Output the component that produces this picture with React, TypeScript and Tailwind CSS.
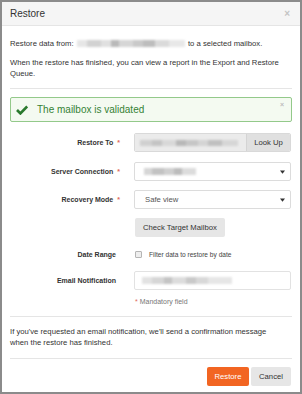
import React from "react";

function Blur({ segs, className = "" }: { segs: [number, string][]; className?: string }) {
  return (
    <span className={"inline-flex items-center align-middle blur-[0.8px] " + className}>
      {segs.map(([w, c], i) => (
        <span key={i} className="inline-block h-full" style={{ width: w, background: c }} />
      ))}
    </span>
  );
}

function Caret() {
  return (
    <svg width="5" height="4" viewBox="0 0 5 4" className="absolute right-[5px] top-1/2 -translate-y-1/2">
      <path d="M0 0.5 L5 0.5 L2.5 3.8 Z" fill="#333" />
    </svg>
  );
}

function Label({ text, req }: { text: string; req?: boolean }) {
  return (
    <div className="w-[110px] shrink-0 text-right text-[7px] font-bold text-[#333] leading-none">
      {text}
      {req ? <span className="text-[#e06a5a] ml-[4px]">*</span> : <span className="inline-block w-[4px]" />}
    </div>
  );
}

export default function App() {
  return (
    <div className="w-[302px] h-[394px] box-border border-2 border-[#8b8b8b] bg-white flex flex-col font-['Liberation_Sans',Arial,sans-serif] text-[#333] overflow-hidden">
      {/* Header */}
      <div className="h-[24px] shrink-0 bg-[#f5f5f5] border-b border-[#e5e5e5] flex items-center justify-between pl-[8px] pr-[10px]">
        <span className="text-[10px] text-[#333]">Restore</span>
        <span className="text-[10px] font-bold text-[#c4c4c4] leading-none">×</span>
      </div>

      {/* Body */}
      <div className="px-[8px] pt-[12px] flex flex-col">
        <p className="text-[7.7px] leading-[11px] mb-[8px] whitespace-nowrap">
          Restore data from:{" "}
          <Blur
            className="h-[7px] w-[108px] mx-[1px]"
            segs={[
              [10, "#e6e6e6"],
              [14, "#d2d2d2"],
              [10, "#e0e0e0"],
              [8, "#b9b9b9"],
              [14, "#d6d6d6"],
              [10, "#c9c9c9"],
              [12, "#bdbdbd"],
              [14, "#dadada"],
              [16, "#e8e8e8"],
            ]}
          />{" "}
          to a selected mailbox.
        </p>
        <p className="text-[7.7px] leading-[11px]">
          When the restore has finished, you can view a report in the Export and Restore Queue.
        </p>
        <div className="h-px bg-[#e5e5e5] mt-[9px]" />

        {/* Alert */}
        <div className="mt-[8px] h-[25px] border border-[#93c98a] bg-[#f4faf1] rounded-[2px] flex items-center relative">
          <svg width="12" height="10" viewBox="0 0 12 10" className="ml-[5px]">
            <path d="M1 5 L4.4 8.4 L11.2 1.5" fill="none" stroke="#2a7a2e" strokeWidth="2.7" strokeLinejoin="miter" />
          </svg>
          <span className="ml-[9px] text-[10px] text-[#358235] leading-none">The mailbox is validated</span>
          <span className="absolute right-[7px] top-[3px] text-[7px] font-bold text-[#bdbdbd] leading-none">×</span>
        </div>

        {/* Form */}
        <div className="mt-[11px] flex flex-col">
          {/* Restore To */}
          <div className="flex items-center">
            <Label text="Restore To" req />
            <div className="ml-[14px] w-[157px] h-[19px] flex border border-[#d9d9d9] rounded-[2px] overflow-hidden">
              <div className="flex-1 bg-[#ebebeb] flex items-center pl-[5px]">
                <Blur
                  className="h-[6px] w-[98px]"
                  segs={[
                    [12, "#d0d0d0"],
                    [10, "#c4c4c4"],
                    [14, "#d8d8d8"],
                    [10, "#b8b8b8"],
                    [12, "#c6c6c6"],
                    [10, "#d4d4d4"],
                    [14, "#c0c0c0"],
                    [16, "#d6d6d6"],
                  ]}
                />
              </div>
              <div className="w-[44px] bg-[#e0e0e0] border-l border-[#d4d4d4] flex items-center justify-center text-[7.7px] text-[#333]">
                Look Up
              </div>
            </div>
          </div>

          {/* Server Connection */}
          <div className="flex items-center mt-[10px]">
            <Label text="Server Connection" req />
            <div className="ml-[14px] w-[157px] h-[19px] relative border border-[#dcdcdc] rounded-[2px] bg-white flex items-center pl-[9px]">
              <Blur
                className="h-[7px] w-[52px]"
                segs={[
                  [8, "#d6d6d6"],
                  [12, "#c2c2c2"],
                  [10, "#cfcfcf"],
                  [8, "#bcbcbc"],
                  [14, "#dcdcdc"],
                ]}
              />
              <Caret />
            </div>
          </div>

          {/* Recovery Mode */}
          <div className="flex items-center mt-[9px]">
            <Label text="Recovery Mode" req />
            <div className="ml-[14px] w-[157px] h-[19px] relative border border-[#dcdcdc] rounded-[2px] bg-white flex items-center pl-[10px] text-[7.7px] text-[#555]">
              Safe view
              <Caret />
            </div>
          </div>

          {/* Check Target Mailbox */}
          <div className="flex items-center mt-[9px]">
            <div className="w-[110px] shrink-0" />
            <div className="ml-[15px] h-[19px] px-[8px] bg-[#e6e6e6] rounded-[2px] flex items-center text-[7.7px] text-[#333]">
              Check Target Mailbox
            </div>
          </div>

          {/* Date Range */}
          <div className="flex items-center mt-[12px] h-[11px]">
            <Label text="Date Range" />
            <div className="ml-[15px] flex items-center">
              <span className="inline-block w-[7px] h-[7px] border border-[#b5b5b5] bg-[#eeeeee] rounded-[1px]" />
              <span className="ml-[7px] text-[6.6px] text-[#444]">Filter data to restore by date</span>
            </div>
          </div>

          {/* Email Notification */}
          <div className="flex items-center mt-[11px]">
            <Label text="Email Notification" />
            <div className="ml-[14px] w-[157px] h-[19px] border border-[#e2e2e2] rounded-[2px] bg-white flex items-center pl-[7px]">
              <Blur
                className="h-[7px] w-[90px]"
                segs={[
                  [10, "#e2e2e2"],
                  [12, "#d6d6d6"],
                  [8, "#c4c4c4"],
                  [14, "#dcdcdc"],
                  [10, "#c9c9c9"],
                  [12, "#d8d8d8"],
                  [24, "#e6e6e6"],
                ]}
              />
            </div>
          </div>

          {/* Mandatory */}
          <div className="flex items-center mt-[7px] h-[11px]">
            <div className="w-[110px] shrink-0" />
            <span className="ml-[15px] text-[7px] text-[#777]">
              <span className="text-[#e06a5a]">*</span> Mandatory field
            </span>
          </div>
        </div>

        <div className="h-px bg-[#e5e5e5] mt-[8px]" />
        <p className="text-[7.7px] leading-[11px] mt-[9px] pr-[10px]">
          If you've requested an email notification, we'll send a confirmation message when the restore has finished.
        </p>
        <div className="h-px bg-[#e5e5e5] mt-[10px]" />

        {/* Footer */}
        <div className="flex justify-end mt-[8px] pr-[1px]">
          <div className="h-[19px] w-[42px] bg-[#f26522] rounded-[2px] flex items-center justify-center text-[7.7px] text-white">
            Restore
          </div>
          <div className="ml-[2px] h-[19px] w-[40px] bg-[#e6e6e6] rounded-[2px] flex items-center justify-center text-[7.7px] text-[#333]">
            Cancel
          </div>
        </div>
      </div>
    </div>
  );
}
